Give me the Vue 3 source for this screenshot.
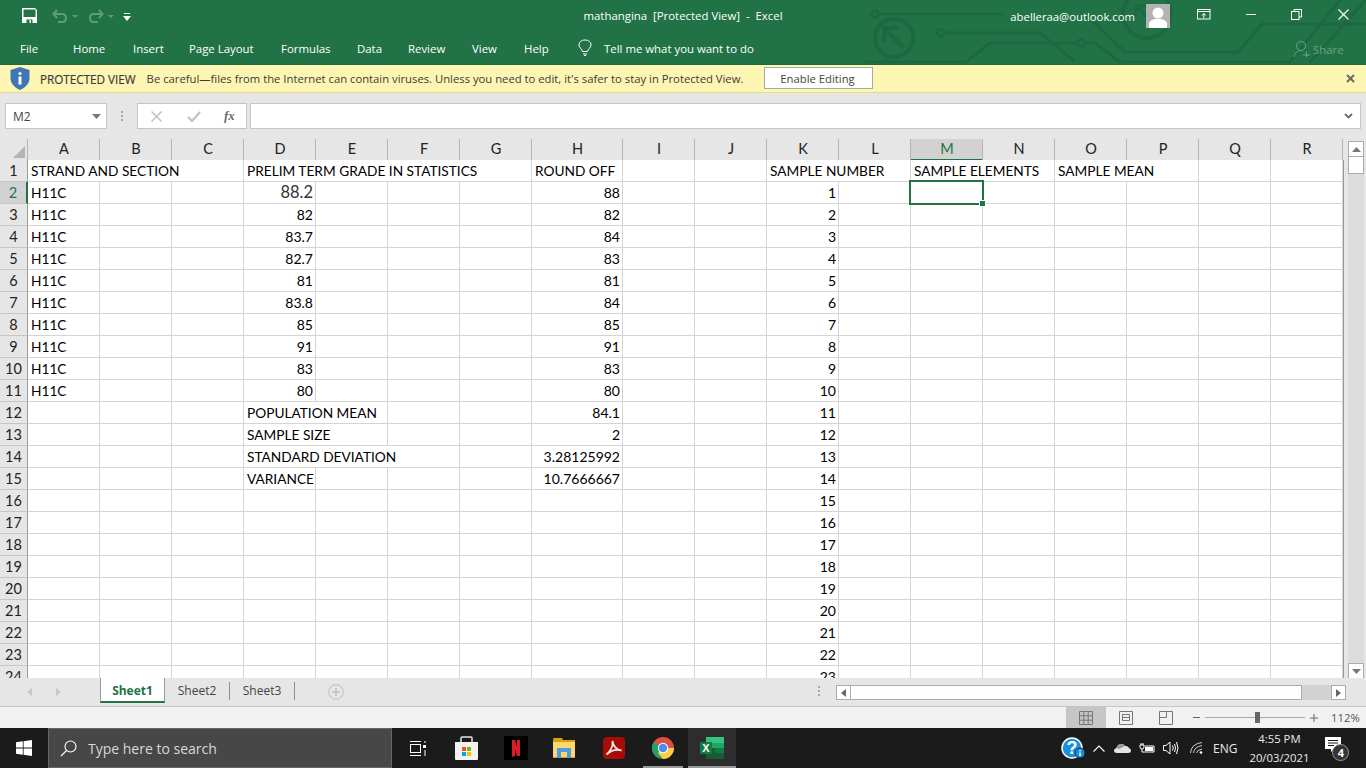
<script setup>
import { computed } from 'vue'

const tabs = [
  ['File', 53], ['Home', 60], ['Insert', 56], ['Page Layout', 92], ['Formulas', 76],
  ['Data', 51], ['Review', 64], ['View', 52], ['Help', 54]
]
const letters = 'ABCDEFGHIJKLMNOPQR'.split('')
const grades = ['88.2', '82', '83.7', '82.7', '81', '83.8', '85', '91', '83', '80']
const rounded = ['88', '82', '84', '83', '81', '84', '85', '91', '83', '80']

const content = {
  A1: { t: 'STRAND AND SECTION', span: 3 },
  D1: { t: 'PRELIM TERM GRADE IN STATISTICS', span: 4 },
  H1: { t: 'ROUND OFF' },
  K1: { t: 'SAMPLE NUMBER', span: 2 },
  M1: { t: 'SAMPLE ELEMENTS', span: 2 },
  O1: { t: 'SAMPLE MEAN', span: 2 },
  D12: { t: 'POPULATION MEAN', span: 2 },
  H12: { t: '84.1', num: true },
  D13: { t: 'SAMPLE SIZE', span: 2 },
  H13: { t: '2', num: true },
  D14: { t: 'STANDARD DEVIATION', span: 3 },
  H14: { t: '3.28125992', num: true },
  D15: { t: 'VARIANCE' },
  H15: { t: '10.7666667', num: true }
}
grades.forEach((g, i) => {
  content['A' + (i + 2)] = { t: 'H11C' }
  content['D' + (i + 2)] = { t: g, num: true, big: i === 0 }
  content['H' + (i + 2)] = { t: rounded[i], num: true }
})
for (let r = 2; r <= 24; r++) content['K' + r] = { t: String(r - 1), num: true }

const rows = computed(() => {
  const out = []
  for (let r = 1; r <= 24; r++) {
    const cells = []
    for (let c = 0; c < letters.length; c++) {
      const item = content[letters[c] + r]
      if (item) {
        cells.push({ key: letters[c] + r, ...item, span: item.span || 1 })
        c += (item.span || 1) - 1
      } else {
        cells.push({ key: letters[c] + r, t: '', span: 1 })
      }
    }
    out.push({ r, cells })
  }
  return out
})
</script>

<template>
  <div class="screen">
    <header class="ribbon">
      <svg class="circuit" width="506" height="64" viewBox="860 0 506 64" fill="none">
        <g class="trace">
          <circle cx="875" cy="14" r="3.5" />
          <path d="M879 14H1003M1085 14 1125 52H1238L1262 24H1366" />
          <circle cx="894" cy="38" r="19" stroke-width="4" />
          <path d="M884 42V28H898M885 29 903 47" stroke-width="4" />
          <circle cx="941" cy="33" r="3.5" />
          <path d="M945 33H1040L1075 62" />
          <circle cx="1081" cy="43" r="3.5" />
          <path d="M865 62H966L990 43H1077M1085 43H1095L1120 62H1290L1340 0M1310 62 1366 0" />
          <circle cx="1147" cy="14" r="24" stroke-width="4" />
          <path d="M1136 6H1148M1136 6V18M1137 7 1155 26" stroke-width="3" />
        </g>
      </svg>
      <div class="titlebar">
        <div class="qat">
          <svg width="15" height="15" viewBox="0 0 15 15" class="save">
            <path d="M0 0H13L15 2V15H0Z" fill="#fff" />
            <rect x="1.500" y="1.500" width="12" height="7.500" fill="#217346" />
            <rect x="4.500" y="11.500" width="6" height="3.500" fill="#217346" />
            <rect x="7.500" y="12" width="1.500" height="3" fill="#fff" />
          </svg>
          <svg width="26" height="14" viewBox="0 0 26 14" class="undo">
            <path d="M5 1 1.500 5 5 9M2 5H10Q14 5 14 9T10 13H6" fill="none" stroke="#5d9b7a" stroke-width="2" />
            <path d="M20 6H26L23 9Z" fill="#5d9b7a" />
          </svg>
          <svg width="26" height="14" viewBox="0 0 26 14" class="redo">
            <path d="M11 1 14.500 5 11 9M14 5H6Q2 5 2 9T6 13H10" fill="none" stroke="#5d9b7a" stroke-width="2" />
            <path d="M20 6H26L23 9Z" fill="#5d9b7a" />
          </svg>
          <svg width="8" height="8" viewBox="0 0 8 8" class="customize">
            <rect x="1" y="0" width="6" height="1" fill="#fff" />
            <path d="M0 3H8L4 8Z" fill="#fff" />
          </svg>
        </div>
        <div class="doc-title">mathangina&nbsp; [Protected View]&nbsp; -&nbsp; Excel</div>
        <div class="window">
          <span class="account">abelleraa@outlook.com</span>
          <svg class="avatar" width="24" height="24" viewBox="0 0 24 24">
            <rect width="24" height="24" fill="#b3b3b3" />
            <circle cx="12" cy="9" r="5.500" fill="#fff" />
            <path d="M3 24V19Q4 16 9 15H15Q20 16 21 19V24Z" fill="#fff" />
          </svg>
          <svg class="win-icon display" width="14" height="11" viewBox="0 0 14 11" fill="none" stroke="#fff">
            <rect x=".5" y=".5" width="12.500" height="9.500" />
            <path d="M1 2.500H13M6.800 9V4.500M4.800 6.500 6.800 4.500 8.800 6.500" />
          </svg>
          <svg class="win-icon min" width="11" height="2" viewBox="0 0 11 2"><rect width="11" height="1" fill="#fff" /></svg>
          <svg class="win-icon restore" width="11" height="11" viewBox="0 0 11 11" fill="none" stroke="#fff">
            <rect x=".5" y="2.500" width="7.500" height="8" /><path d="M3 2.500V.5H10.500V8H8" />
          </svg>
          <svg class="win-icon close" width="11" height="11" viewBox="0 0 11 11" stroke="#fff" stroke-width="1.100"><path d="M.5.5 10.500 10.500M10.500.5.5 10.500" /></svg>
        </div>
      </div>
      <nav class="tabs">
        <span v-for="t in tabs" :key="t[0]" class="tab" :style="{ width: t[1] + 'px' }">{{ t[0] }}</span>
        <svg class="bulb" width="14" height="17" viewBox="0 0 14 17" fill="none" stroke="#fff">
          <path d="M4.500 12.500C4 10 1 8.500 1 6 1 3 3.500 1 7 1s6 2 6 5c0 2.500-3 4-3.500 6.500Z" />
          <path d="M5 15H9M6 16.500H8" />
        </svg>
        <span class="tell">Tell me what you want to do</span>
        <span class="share">
          <svg width="18" height="18" viewBox="0 0 18 18" fill="none" stroke="#6ba488">
            <circle cx="8" cy="6" r="4.500" /><path d="M1 17Q2 11 8 10.500M10 15H17M13.500 11.500V17" />
          </svg>
          Share
        </span>
      </nav>
    </header>

    <div class="protected">
      <svg class="shield" width="20" height="23" viewBox="0 0 20 23">
        <path d="M10 0 19.500 3V12Q19 19 10 23 1 19 .5 12V3Z" fill="#3f77b5" />
        <circle cx="10" cy="6.500" r="1.600" fill="#fff" />
        <rect x="8.500" y="9.500" width="3" height="8" fill="#fff" />
      </svg>
      <strong class="pv-title">PROTECTED VIEW</strong>
      <span class="pv-text">Be careful—files from the Internet can contain viruses. Unless you need to edit, it's safer to stay in Protected View.</span>
      <button class="enable">Enable Editing</button>
      <svg class="pv-close" width="9" height="9" viewBox="0 0 9 9" stroke="#6a6a6a" stroke-width="2"><path d="M1 1 8 8M8 1 1 8" /></svg>
    </div>

    <div class="formula">
      <div class="namebox">
        <span>M2</span>
        <svg width="9" height="5" viewBox="0 0 9 5"><path d="M0 0H9L4.500 5Z" fill="#7a7a7a" /></svg>
      </div>
      <div class="dots"><i></i><i></i><i></i></div>
      <div class="fx-box">
        <svg width="11" height="11" viewBox="0 0 11 11" stroke="#c2c2c2" stroke-width="1.500"><path d="M.5.5 10.500 10.500M10.500.5.5 10.500" /></svg>
        <svg width="14" height="11" viewBox="0 0 14 11" fill="none" stroke="#c2c2c2" stroke-width="2.200"><path d="M1 6 5 10 13 1" /></svg>
        <span class="fx">fx</span>
      </div>
      <div class="formula-input">
        <svg width="9" height="6" viewBox="0 0 9 6" fill="none" stroke="#6a6a6a" stroke-width="1.800"><path d="M1 1 4.500 4.500 8 1" /></svg>
      </div>
    </div>

    <div class="sheet-area">
      <div class="grid">
        <div class="head-row">
          <div class="corner"><span class="tri"></span></div>
          <div v-for="l in letters" :key="l" class="col" :class="{ hl: l === 'M', wide: l === 'H' }">{{ l }}</div>
        </div>
        <div class="rows">
          <div v-for="row in rows" :key="row.r" class="row">
            <div class="rowhead" :class="{ hl: row.r === 2 }">{{ row.r }}</div>
            <div
              v-for="c in row.cells"
              :key="c.key"
              class="cell"
              :class="{ num: c.num, big: c.big }"
              :style="{ gridColumn: 'span ' + c.span }"
            >{{ c.t }}</div>
          </div>
          <div class="selection"><i></i></div>
        </div>
      </div>
      <div class="vscroll">
        <div class="sb-btn"><svg width="9" height="5" viewBox="0 0 9 5"><path d="M0 5H9L4.500 0Z" fill="#777" /></svg></div>
        <div class="sb-thumb"></div>
        <div class="sb-track"></div>
        <div class="sb-btn"><svg width="9" height="5" viewBox="0 0 9 5"><path d="M0 0H9L4.500 5Z" fill="#777" /></svg></div>
      </div>
    </div>

    <div class="sheetbar">
      <div class="nav-arrows">
        <svg width="5" height="8" viewBox="0 0 5 8"><path d="M5 0V8L0 4Z" fill="#c8c8c8" /></svg>
        <svg width="5" height="8" viewBox="0 0 5 8"><path d="M0 0V8L5 4Z" fill="#c8c8c8" /></svg>
      </div>
      <div class="stab active">Sheet1</div>
      <div class="stab">Sheet2</div>
      <div class="stab">Sheet3</div>
      <svg class="addsheet" width="16" height="16" viewBox="0 0 16 16" fill="none" stroke="#c6c6c6" stroke-width="1.200">
        <circle cx="8" cy="8" r="7.300" /><path d="M8 4V12M4 8H12" stroke-width="1.800" />
      </svg>
      <div class="dots small"><i></i><i></i><i></i></div>
      <div class="hscroll">
        <div class="hbtn"><svg width="5" height="8" viewBox="0 0 5 8"><path d="M5 0V8L0 4Z" fill="#666" /></svg></div>
        <div class="hthumb"></div>
        <div class="htrack"></div>
        <div class="hbtn"><svg width="5" height="8" viewBox="0 0 5 8"><path d="M0 0V8L5 4Z" fill="#666" /></svg></div>
      </div>
    </div>

    <div class="status">
      <div class="view active">
        <svg width="14" height="14" viewBox="0 0 14 14" fill="none" stroke="#777"><path d="M.5.5H13.500V13.500H.5ZM.5 4.800H13.500M.5 9.200H13.500M4.800.5V13.500M9.200.5V13.500" /></svg>
      </div>
      <div class="view">
        <svg width="14" height="14" viewBox="0 0 14 14" fill="none" stroke="#777"><path d="M.5.5H13.500V13.500H.5ZM3.500 3.500H10.500M3.500 6.500H10.500M3.500 9.500H10.500V3.500H3.500Z" /></svg>
      </div>
      <div class="view">
        <svg width="14" height="14" viewBox="0 0 14 14" fill="none" stroke="#777"><path d="M.5.5H13.500V13.500H.5ZM7.500 .5V6.500H.5" /></svg>
      </div>
      <div class="zoom">
        <svg width="7" height="1" viewBox="0 0 7 1"><rect width="7" height="1" fill="#666" /></svg>
        <div class="slider"><i></i></div>
        <svg width="8" height="8" viewBox="0 0 8 8"><path d="M0 4H8M4 0V8" stroke="#666" /></svg>
        <span class="pct">112%</span>
      </div>
    </div>

    <footer class="taskbar">
      <div class="start">
        <svg width="16" height="16" viewBox="0 0 16 16"><path d="M0 2.300 6.800 1.300V7.600H0ZM7.600 1.200 16 0V7.600H7.600ZM0 8.400H6.800V14.700L0 13.700ZM7.600 8.400H16V16L7.600 14.800Z" fill="#fff" /></svg>
      </div>
      <div class="search">
        <svg width="17" height="17" viewBox="0 0 17 17" fill="none" stroke="#fff" stroke-width="1.100"><circle cx="10.500" cy="6.500" r="5.500" /><path d="M6.500 10.500 1 16" /></svg>
        <span>Type here to search</span>
      </div>
      <div class="apps">
        <div class="app taskview">
          <svg width="16" height="15" viewBox="0 0 16 15" fill="none" stroke="#fff"><rect x=".5" y="3.500" width="10" height="8" /><path d="M0 .5H11M0 14.500H11M15 0V2M15 9V15" /><rect x="13" y="4" width="3" height="3" fill="#fff" stroke="none" /></svg>
        </div>
        <div class="app store">
          <svg width="23" height="24" viewBox="0 0 23 24">
            <path d="M6 6V2Q6 1 7 1H16Q17 1 17 2V6" fill="none" stroke="#e6e6e6" stroke-width="1.500" />
            <path d="M0 6H23V23Q23 24 22 24H1Q0 24 0 23Z" fill="#f2f2f2" />
            <rect x="7" y="11" width="4" height="4" fill="#f25022" /><rect x="12" y="11" width="4" height="4" fill="#7fba00" />
            <rect x="7" y="16" width="4" height="4" fill="#00a4ef" /><rect x="12" y="16" width="4" height="4" fill="#ffb900" />
          </svg>
        </div>
        <div class="app netflix">
          <svg width="24" height="24" viewBox="0 0 24 24"><rect width="24" height="24" fill="#000" /><path d="M8 4H11L16 20H13ZM8 4H11V20L8 21ZM13 4H16V20L13 20Z" fill="#d81f26" /></svg>
        </div>
        <div class="app folder">
          <svg width="23" height="20" viewBox="0 0 23 20">
            <path d="M0 2Q0 0 1 0H9L10 2H22V20H0Z" fill="#d9a00f" />
            <path d="M0 4H22V19H0Z" fill="#fbd96b" />
            <path d="M4 10H18V20H14V14H8V20H4Z" fill="#4e9de0" />
          </svg>
        </div>
        <div class="app acrobat">
          <svg width="22" height="22" viewBox="0 0 22 22">
            <rect width="22" height="22" rx="4" fill="#a90c06" />
            <path d="M3.500 17.500C7 15 10.500 9 9.500 4 10 9 13.500 13 18.500 13.500 14 12 8 13.500 3.500 17.500Z" fill="none" stroke="#f6e9e7" stroke-width="1.800" />
          </svg>
        </div>
        <div class="app chrome">
          <svg width="22" height="22" viewBox="0 0 22 22">
            <circle cx="11" cy="11" r="11" fill="#dd5144" />
            <path d="M11 11 1.500 5.500A11 11 0 0 0 11 22Z" fill="#1da462" />
            <path d="M11 11H22A11 11 0 0 1 11 22L6 16Z" fill="#ffcd46" />
            <circle cx="11" cy="11" r="5.200" fill="#fff" /><circle cx="11" cy="11" r="4.200" fill="#4c8bf5" />
          </svg>
        </div>
        <div class="app excel">
          <svg width="24" height="22" viewBox="0 0 24 22">
            <rect x="6" width="18" height="22" rx="1" fill="#185c37" />
            <rect x="6" width="18" height="6" fill="#33c481" />
            <rect x="15" y="6" width="9" height="5" fill="#21a366" />
            <rect x="6" y="6" width="9" height="5" fill="#21a366" />
            <rect x="15" y="11" width="9" height="5" fill="#107c41" />
            <rect x="0" y="5" width="12" height="12" rx="1" fill="#107c41" />
            <text x="6" y="15" class="x-letter" text-anchor="middle">X</text>
          </svg>
        </div>
      </div>
      <div class="tray">
        <svg class="help" width="24" height="22" viewBox="0 0 24 22">
          <circle cx="11" cy="11" r="10" fill="#1b8fdc" stroke="#fff" stroke-width="1.500" />
          <text x="11" y="17" class="q" text-anchor="middle">?</text>
          <circle cx="19" cy="16" r="5" fill="#1b8fdc" stroke="#1a1a1a" stroke-width=".8" /><rect x="18.300" y="15.500" width="1.500" height="3.500" fill="#fff" /><rect x="18.300" y="13" width="1.500" height="1.300" fill="#fff" />
        </svg>
        <svg class="t chev" width="12" height="7" viewBox="0 0 12 7" fill="none" stroke="#fff" stroke-width="1.100"><path d="M.5 6.500 6 1 11.500 6.500" /></svg>
        <svg class="t cloud" width="17" height="10" viewBox="0 0 17 10"><path d="M3 10Q0 10 0 7.500 0 5.500 2.500 5 3.500 1 7.500 1 10 1 11 3 14 2.500 15 5 17 5.500 17 7.500 17 10 14 10Z" fill="#e4e4e4" /><path d="M2.500 5C3.500 1 7.500 1 7.500 1 10 1 11 3 11 3L5 6Z" fill="#9a9a9a" /></svg>
        <svg class="t batt" width="16" height="11" viewBox="0 0 16 11" fill="none" stroke="#fff"><path d="M2 0V2M4 0V2M1 2H5V4Q5 6 3 6T1 4ZM3 6V9H15V3H6" /><rect x="6" y="4" width="8" height="4" fill="#fff" stroke="none" /></svg>
        <svg class="t vol" width="16" height="14" viewBox="0 0 16 14" fill="none" stroke="#fff"><path d="M.5 4.500H3L7 1V13L3 9.500H.5ZM9.500 4.500Q11 7 9.500 9.500M11.500 3Q13.500 7 11.500 11M13.500 1Q16.500 7 13.500 13" /></svg>
        <svg class="t wifi" width="13" height="12" viewBox="0 0 13 12" fill="none" stroke="#cfcfcf"><path d="M.5 11Q1 2 12 .5M3.500 11Q4 5 12 3.500M6.500 11Q7 8 12 7" /><circle cx="11" cy="10.500" r="1.300" fill="#fff" stroke="none" /></svg>
        <span class="eng">ENG</span>
        <div class="clock"><div>4:55 PM</div><div>20/03/2021</div></div>
        <div class="notif">
          <svg width="16" height="15" viewBox="0 0 16 15"><path d="M0 0H16V12H9L6 15V12H0Z" fill="#fff" /><path d="M3 3.500H13M3 6H13M3 8.500H9" stroke="#1a1a1a" /></svg>
          <span class="badge">4</span>
        </div>
      </div>
    </footer>
  </div>
</template>

<style scoped>
.screen { width: 1366px; height: 768px; display: flex; flex-direction: column; overflow: hidden; background: #e6e6e6; font-family: "Open Sans", "Liberation Sans", sans-serif; color: #444; }

.ribbon { position: relative; height: 65px; background: #217346; flex: none; overflow: hidden; color: #fff; border-bottom: 1px solid #1e6a40; box-sizing: border-box; }
.circuit { position: absolute; left: 860px; top: 0; }
.trace { stroke: #1d6840; stroke-width: 3; }
.titlebar { position: relative; height: 32px; display: grid; grid-template-columns: 1fr auto 1fr; align-items: center; }
.qat { display: flex; align-items: center; height: 32px; padding-left: 22px; }
.save { margin-top: -1px; }
.undo { margin-left: 15px; }
.redo { margin-left: 10px; }
.customize { margin-left: 9px; margin-top: 2px; }
.doc-title { font-size: 11.400px; margin-top: -1px; }
.window { display: flex; align-items: center; justify-content: flex-end; height: 32px; }
.account { font-size: 11.300px; }
.avatar { margin-left: 11px; margin-top: -1px; }
.display { margin-left: 27px; margin-top: -3px; }
.min { margin-left: 35px; margin-top: -2px; width: 10px; }
.restore { margin-left: 35px; margin-top: -3px; }
.close { margin-left: 36px; margin-right: 17px; margin-top: -3px; }

.tabs { position: relative; display: flex; align-items: center; height: 32px; padding-left: 20px; font-size: 11.400px; }
.tab { flex: none; }
.bulb { margin-top: -1px; flex: none; }
.tell { margin-left: 12px; }
.share { position: absolute; left: 1293px; top: 8px; display: flex; align-items: center; gap: 2px; color: #6ba488; }

.protected { height: 28px; flex: none; box-sizing: border-box; display: flex; align-items: center; background: #fdf5b2; border-bottom: 1px solid #e6dd8c; position: relative; font-size: 11.270px; color: #3c3c3c; padding-left: 10px; }
.pv-title { font-weight: 400; font-size: 11.700px; margin-left: 10px; -webkit-text-stroke: .2px #3c3c3c; }
.pv-text { margin-left: 11px; white-space: nowrap; }
.enable { position: absolute; left: 764px; top: 2px; width: 109px; height: 22px; background: #fff; border: 1px solid #a8a8a8; font: inherit; font-size: 11.300px; color: #444; padding: 0 2px 0 0; }
.pv-close { position: absolute; left: 1346px; top: 9px; }

.formula { height: 46px; flex: none; box-sizing: border-box; padding: 10px 5px 10px 5px; display: flex; align-items: stretch; background: #e6e6e6; }
.namebox { width: 102px; box-sizing: border-box; background: #fff; border: 1px solid #c6c6c6; display: flex; align-items: center; justify-content: space-between; padding: 0 5px 0 7px; font-size: 12px; color: #444; }
.dots { width: 30px; display: flex; flex-direction: column; gap: 2px; align-items: center; justify-content: center; }
.dots i { width: 2px; height: 2px; background: #aaa; }
.fx-box { width: 110px; box-sizing: border-box; background: #fff; border: 1px solid #c6c6c6; display: flex; align-items: center; padding-left: 13px; }
.fx-box svg:nth-child(2) { margin-left: 25px; }
.fx { font-family: "Liberation Serif", serif; font-style: italic; font-weight: 700; font-size: 13px; color: #6a6a6a; margin-left: 23px; }
.formula-input { flex: 1; margin-left: 3px; background: #fff; border: 1px solid #c6c6c6; display: flex; align-items: center; justify-content: flex-end; padding-right: 7px; }

.sheet-area { height: 540px; flex: none; display: flex; overflow: hidden; }
.grid { width: 1344px; flex: none; display: flex; flex-direction: column; font-family: Lato, "Liberation Sans", sans-serif; }
.head-row, .row { display: grid; grid-template-columns: 28px repeat(7, 72px) 91px repeat(10, 72px); }
.head-row { height: 21px; background: #e6e6e6; flex: none; }
.corner { position: relative; box-sizing: border-box; border-right: 1px solid #b5b5b5; border-bottom: 1px solid #9b9b9b; }
.tri { position: absolute; right: 2px; bottom: 2px; width: 0; height: 0; border-left: 12px solid transparent; border-bottom: 12px solid #b4b4b4; }
.col { box-sizing: border-box; border-right: 1px solid #b5b5b5; border-bottom: 1px solid #9b9b9b; text-align: center; font-size: 14.500px; line-height: 20px; color: #222; padding-left: 1px; }
.col.hl { background: #d2d2d2; border-bottom: 2px solid #217346; color: #217346; }
.rows { position: relative; height: 518px; background: #fff; overflow: hidden; border-bottom: 1px solid #9b9b9b; border-right: 1px solid #9b9b9b; }
.row { height: 22px; }
.rowhead { box-sizing: border-box; background: #e6e6e6; border-right: 1px solid #9b9b9b; border-bottom: 1px solid #c6c6c6; text-align: center; font-size: 14.500px; line-height: 21px; color: #222; }
.rowhead.hl { background: #d2d2d2; border-right: 2px solid #217346; color: #217346; }
.cell { box-sizing: border-box; border-right: 1px solid #d4d4d4; border-bottom: 1px solid #d4d4d4; padding: 0 0 0 3px; font-size: 13.700px; line-height: 21px; color: #000; white-space: nowrap; overflow: hidden; }
.cell.num { text-align: right; padding: 0 2px 0 0; font-size: 14px; }
.cell.big { font-size: 16.500px; color: #333; }
.selection { position: absolute; left: 909px; top: 20px; width: 75px; height: 25px; box-sizing: border-box; border: 2px solid #217346; }
.selection i { position: absolute; right: -3px; bottom: -3px; width: 5px; height: 5px; background: #217346; border: 1px solid #fff; box-sizing: content-box; margin: -1px; }

.vscroll { width: 22px; box-sizing: border-box; padding: 2px 2px 0 4px; display: flex; flex-direction: column; }
.sb-btn { height: 16px; flex: none; box-sizing: border-box; background: #fff; border: 1px solid #ababab; display: flex; align-items: center; justify-content: center; }
.sb-thumb { height: 17px; flex: none; box-sizing: border-box; background: #fff; border: 1px solid #ababab; border-top: 0; }
.sb-track { flex: 1; height: 489px; background: #dcdcdc; }

.sheetbar { height: 29px; flex: none; box-sizing: border-box; display: flex; align-items: flex-start; background: #e6e6e6; border-bottom: 1px solid #c6c6c6; position: relative; margin-top: -1px; }
.nav-arrows { width: 100px; height: 27px; flex: none; display: flex; align-items: center; gap: 24px; padding-left: 27px; box-sizing: border-box; }
.stab { height: 18px; width: 65px; flex: none; margin-top: 4px; text-align: center; border-right: 1px solid #8f8f8f; font-size: 12px; line-height: 17px; color: #444; box-sizing: border-box; }
.stab.active { margin-top: 0; height: 25px; background: #fff; border: 1px solid #9b9b9b; border-top: 0; border-bottom: 2px solid #217346; color: #217346; font-weight: 700; line-height: 26px; }
.addsheet { margin-left: 33px; margin-top: 6px; flex: none; }
.dots.small { position: absolute; left: 804px; top: 8px; }
.hscroll { position: absolute; left: 836px; top: 7px; width: 510px; height: 15px; display: flex; box-sizing: border-box; }
.hbtn { width: 15px; flex: none; box-sizing: border-box; background: #fff; border: 1px solid #ababab; display: flex; align-items: center; justify-content: center; }
.hthumb { width: 451px; flex: none; box-sizing: border-box; background: #fff; border: 1px solid #ababab; border-left: 0; }
.htrack { flex: 1; background: #d2d2d2; }

.status { height: 21px; flex: none; box-sizing: border-box; display: flex; align-items: stretch; padding-left: 1066px; background: #f1f1f1; }
.view { width: 40px; display: flex; align-items: center; justify-content: center; }
.view.active { background: #c6c6c6; }
.zoom { display: flex; align-items: center; margin-left: 7px; flex: none; }
.zoom > svg:first-child { flex: none; }
.slider { position: relative; width: 100px; height: 1px; background: #aaa; margin: 0 5px; }
.slider i { position: absolute; left: 50px; top: -5px; width: 5px; height: 11px; background: #666; }
.pct { font-size: 11.300px; margin-left: 13px; color: #555; }

.taskbar { height: 40px; flex: none; background: #1b1b1b; display: flex; align-items: stretch; color: #fff; position: relative; }
.start { width: 48px; flex: none; display: flex; align-items: center; justify-content: center; }
.search { width: 344px; flex: none; box-sizing: border-box; background: #474747; border: 1px solid #666; display: flex; align-items: center; padding-left: 11px; gap: 11px; font-size: 14px; color: #d8d8d8; }
.apps { display: flex; flex: none; margin-left: 1px; }
.app { width: 49px; height: 40px; display: flex; align-items: center; justify-content: center; box-sizing: border-box; flex: none; }
.chrome { position: relative; }
.chrome::after { content: ""; position: absolute; left: 5px; bottom: 0; width: 40px; height: 2px; background: #9a9a9a; }
.excel { position: relative; width: 48px; background: #2d2d2d; margin-left: 1px; }
.excel::after { content: ""; position: absolute; left: 0; bottom: 0; width: 48px; height: 2px; background: #9a9a9a; }
.x-letter { font-family: "Liberation Sans", sans-serif; font-weight: 700; font-size: 11px; fill: #fff; }
.q { font-family: "Liberation Sans", sans-serif; font-weight: 700; font-size: 18px; fill: #fff; }
.tray { position: absolute; left: 1061px; top: 0; height: 40px; display: flex; align-items: center; }
.help { flex: none; margin-top: -1px; }
.t { flex: none; }
.chev { margin-left: 8px; }
.cloud { margin-left: 9px; }
.batt { margin-left: 8px; }
.vol { margin-left: 8px; }
.wifi { margin-left: 11px; }
.eng { font-size: 12px; margin-left: 10px; color: #eaeaea; }
.clock { width: 84px; text-align: center; font-size: 11.300px; line-height: 19px; color: #eaeaea; }
.notif { position: relative; margin-left: 4px; margin-top: -8px; }
.notif svg { display: block; }
.badge { position: absolute; left: 7px; top: 7px; width: 17px; height: 17px; box-sizing: border-box; border: 1px solid #9a9a9a; border-radius: 50%; background: #333; color: #fff; font-size: 11px; font-weight: 700; line-height: 15px; text-align: center; }
</style>

<style>
html, body { margin: 0; padding: 0; }
</style>
